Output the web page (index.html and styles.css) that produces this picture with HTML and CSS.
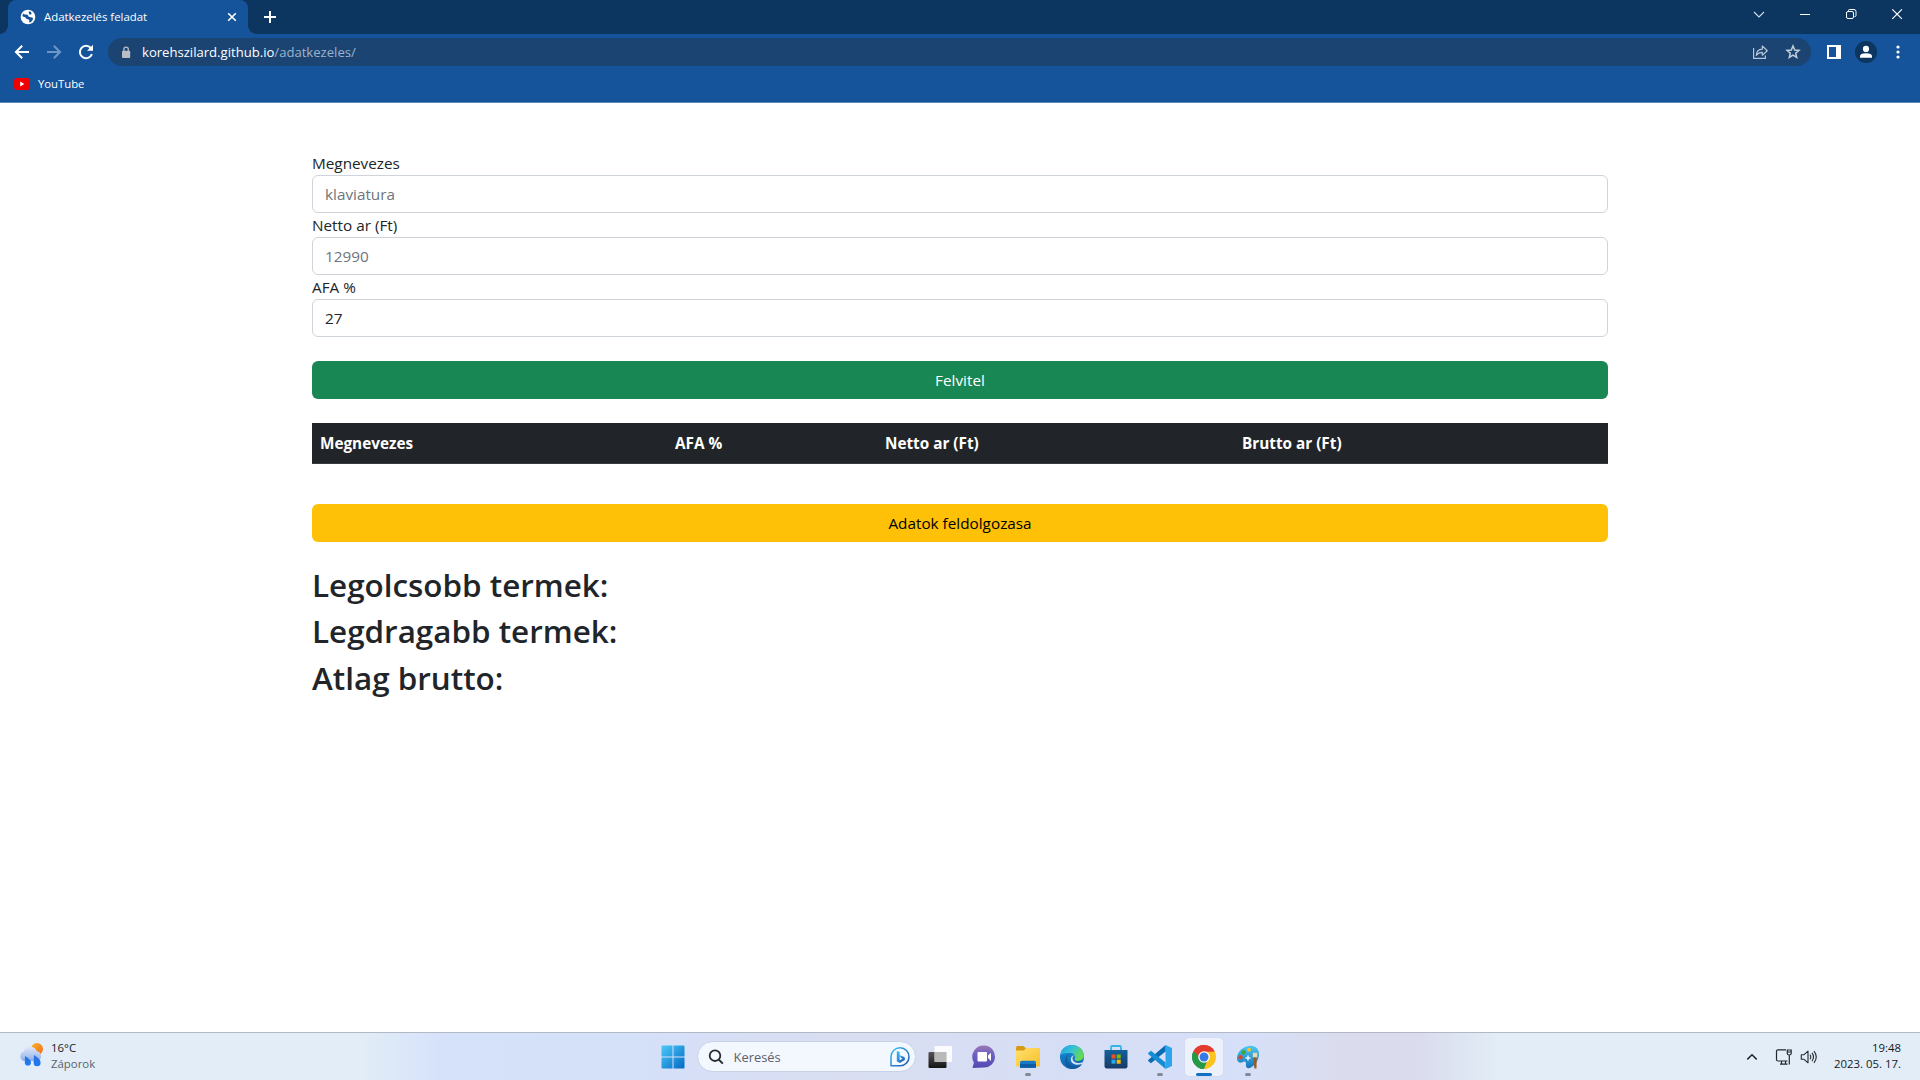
FILE: index.html
```html
<!DOCTYPE html>
<html lang="hu">
<head>
<meta charset="utf-8">
<title>Adatkezelés feladat</title>
<link rel="stylesheet" href="styles.css">
</head>
<body>
<header class="browser">
  <div class="tabstrip">
    <div class="tab">
      <svg class="favicon" width="16" height="16" viewBox="0 0 16 16"><circle cx="8" cy="8" r="7.3" fill="#fff"/><path d="M3 4.5c1.500 1.500 3 .8 4.200 1.200 1.400.5.8 2 2.500 2.300 1.600.3 3.400.2 3.300 1.700-.2 2-2 3.600-3.700 3.900-.4-1.300.6-2.200-.6-3.100-1.200-.8-2.400-.3-2.900-1.600C5.400 7.900 4 8.100 2.400 7.300zM8.800 2.600c-.5 1 .8 1.300.2 2.200-.3.700 1.700 1.100 2.400.5.6-.6-.5-1.600-.4-2.300-.7-.4-1.400-.5-2.200-.4z" fill="#15539a"/></svg>
      <span class="tab-title">Adatkezelés feladat</span>
      <svg class="tab-close" width="10" height="10" viewBox="0 0 10 10"><path d="M1.200 1.200l7.600 7.600M8.800 1.200L1.200 8.800" stroke="#fff" stroke-width="1.600"/></svg>
    </div>
    <svg class="new-tab" width="14" height="14" viewBox="0 0 14 14"><path d="M7 1v12M1 7h12" stroke="#fff" stroke-width="2"/></svg>
    <div class="window-controls">
      <svg width="46" height="30" viewBox="0 0 46 30"><path d="M18 12l5 5 5-5" fill="none" stroke="#cfe0f0" stroke-width="1.100"/></svg>
      <svg width="46" height="30" viewBox="0 0 46 30"><path d="M18 14.500h10" stroke="#fff" stroke-width="1"/></svg>
      <svg width="46" height="30" viewBox="0 0 46 30"><g fill="none" stroke="#fff"><rect x="18.500" y="11.500" width="7" height="7" rx="1.500"/><path d="M20.500 11v-.5q0-1 1-1h4.500q2 0 2 2v4q0 1-1 1h-.5"/></g></svg>
      <svg width="46" height="30" viewBox="0 0 46 30"><path d="M18.300 9.300l9.600 9.600M27.900 9.300l-9.600 9.600" stroke="#fff" stroke-width="1.200"/></svg>
    </div>
  </div>
  <div class="toolbar">
    <svg width="16" height="16" viewBox="0 0 16 16"><path d="M15 8H2.500M8.200 1.700L1.900 8l6.300 6.300" fill="none" stroke="#fff" stroke-width="2"/></svg>
    <svg width="16" height="16" viewBox="0 0 16 16"><path d="M1 8h12.500M7.800 1.700L14.100 8l-6.300 6.300" fill="none" stroke="#6c97c7" stroke-width="2"/></svg>
    <svg width="16" height="16" viewBox="0 0 16 16"><path d="M13.900 10.200A6.200 6.200 0 1 1 12.800 4" fill="none" stroke="#fff" stroke-width="2"/><path d="M15 .8v6H9z" fill="#fff"/></svg>
    <div class="omnibox">
      <svg class="lock" width="10" height="13" viewBox="0 0 10 13"><rect x="1" y="4.700" width="8.200" height="7.300" rx="1" fill="#b9bec5"/><path d="M2.900 5V3.300a2.200 2.200 0 0 1 4.400 0V5" fill="none" stroke="#b9bec5" stroke-width="1.300"/></svg>
      <span class="url">korehszilard.github.io<span class="path">/adatkezeles/</span></span>
      <svg class="share" width="17" height="16" viewBox="0 0 17 16"><g fill="none" stroke="#b6c3d2" stroke-width="1.200"><path d="M1.600 4v10.400h11.800V11.500"/><path d="M4.300 11.300c.2-4 2.500-6 6-6.100V2l5 4.700-5 4.500V8.300c-2.500-.1-4.400.8-6 3z" stroke-linejoin="round"/></g></svg>
      <svg width="16" height="16" viewBox="0 0 16 16"><path d="M8 2l1.700 4 4.300.4-3.300 2.800 1 4.200L8 11.200l-3.700 2.200 1-4.200L2 6.400 6.300 6z" fill="none" stroke="#c3cedb" stroke-width="1.500"/></svg>
    </div>
    <svg class="panel" width="14" height="14" viewBox="0 0 14 14"><path d="M0 0h14v14H0zM2 2v10h7V2z" fill="#fff" fill-rule="evenodd"/></svg>
    <svg class="profile" width="22" height="22" viewBox="0 0 22 22"><circle cx="11" cy="11" r="11" fill="#0c355f"/><circle cx="11" cy="7.900" r="3.100" fill="#fff"/><path d="M5 16.800v-1.600q0-3 6-3t6 3v1.600z" fill="#fff"/></svg>
    <svg class="menu" width="4" height="14" viewBox="0 0 4 14"><g fill="#fff"><circle cx="2" cy="2" r="1.600"/><circle cx="2" cy="7" r="1.600"/><circle cx="2" cy="12" r="1.600"/></g></svg>
  </div>
  <div class="bookmarks">
    <svg width="16" height="12" viewBox="0 0 16 12"><rect width="16" height="12" rx="3" fill="#f00000"/><path d="M6.200 3.500v5L10.400 6z" fill="#fff"/></svg>
    <span>YouTube</span>
  </div>
</header>

<main class="container">
  <label for="nev">Megnevezes</label>
  <input id="nev" class="form-control" type="text" placeholder="klaviatura">
  <label for="netto">Netto ar (Ft)</label>
  <input id="netto" class="form-control" type="text" placeholder="12990">
  <label for="afa">AFA %</label>
  <input id="afa" class="form-control" type="text" value="27">
  <button class="btn btn-success" type="button">Felvitel</button>
  <table class="table">
    <thead><tr><th class="c-name">Megnevezes</th><th class="c-vat">AFA %</th><th class="c-net">Netto ar (Ft)</th><th>Brutto ar (Ft)</th></tr></thead>
  </table>
  <button class="btn btn-warning" type="button">Adatok feldolgozasa</button>
  <h2>Legolcsobb termek:</h2>
  <h2>Legdragabb termek:</h2>
  <h2>Atlag brutto:</h2>
</main>

<footer class="taskbar">
  <div class="weather">
    <svg width="26" height="26" viewBox="0 0 26 26">
      <defs>
        <linearGradient id="sun" x2="1" y2="1"><stop stop-color="#fbb52a"/><stop offset="1" stop-color="#ee6a16"/></linearGradient>
        <linearGradient id="cloud" x2="0" y2="1"><stop stop-color="#dfe8f8"/><stop offset="1" stop-color="#8fb0e8"/></linearGradient>
        <linearGradient id="drop" x2="0" y2="1"><stop stop-color="#2c6fd8"/><stop offset="1" stop-color="#1d7cf8"/></linearGradient>
      </defs>
      <circle cx="19" cy="7" r="6" fill="url(#sun)"/>
      <path d="M6 19a5 5 0 0 1-.4-9.500A7 7 0 0 1 18.600 9 5.300 5.300 0 0 1 20 19z" fill="url(#cloud)"/>
      <path d="M7 14c3 2 6 3.700 6 6.500a3.100 3.100 0 0 1-6.200 0zM16 13c3.500 2.500 6.600 4.300 6.600 7.800a3.500 3.500 0 0 1-7 0z" fill="url(#drop)"/>
    </svg>
    <div class="weather-text"><span>16°C</span><span class="muted">Záporok</span></div>
  </div>

  <div class="apps">
    <div class="app">
      <svg width="24" height="24" viewBox="0 0 24 24"><defs><linearGradient id="win" x2="24" y2="24" gradientUnits="userSpaceOnUse"><stop stop-color="#4ccbf8"/><stop offset="1" stop-color="#0368c4"/></linearGradient></defs><path d="M.5 1.500q0-1 1-1H11.500v11H.5zM12.500.5h10q1 0 1 1v10h-11zM.5 12.500h11v11h-10q-1 0-1-1zM12.500 12.500h11v10q0 1-1 1h-10z" fill="url(#win)"/></svg>
    </div>
    <div class="search">
      <svg width="16" height="16" viewBox="0 0 16 16"><circle cx="7" cy="6.700" r="5.300" fill="none" stroke="#26292e" stroke-width="1.800"/><path d="M10.800 10.600l4 4" stroke="#26292e" stroke-width="2"/></svg>
      <span>Keresés</span>
      <svg class="bing" width="22" height="22" viewBox="0 0 22 22"><defs><linearGradient id="bing" x2="1" y2="1"><stop stop-color="#3ac1f3"/><stop offset="1" stop-color="#1c4fb4"/></linearGradient></defs><path d="M2 19.800V10.500a9 9 0 1 1 9 9.300z" fill="#f4fafe" stroke="url(#bing)" stroke-width="1.500" stroke-linejoin="round"/><path d="M7.800 5l2.800 1v8.300l3-1.600-1.800-1-1-2.400 4.400 1.600q1.200 1.200.6 3l-5 3.200-3-1.800z" fill="url(#bing)"/></svg>
    </div>
    <div class="app">
      <svg width="24" height="24" viewBox="0 0 24 24"><defs><linearGradient id="tv" x2="0" y2="1"><stop stop-color="#555"/><stop offset="1" stop-color="#151515"/></linearGradient></defs><rect x=".5" y="7" width="18" height="16" rx="1" fill="url(#tv)"/><rect x="6.500" y="1" width="17.500" height="16" rx="1" fill="#fff" opacity=".88"/><path d="M6.500 7h12v10h-12z" fill="#a9a9a9" opacity=".75"/></svg>
    </div>
    <div class="app">
      <svg width="24" height="24" viewBox="0 0 24 24"><defs><linearGradient id="chat" x2="0" y2="1"><stop stop-color="#9b79b0"/><stop offset=".35" stop-color="#7263c4"/><stop offset="1" stop-color="#5148b2"/></linearGradient></defs><path d="M12.500.5a11 11 0 1 1-1 22L.5 23l1.400-5.500A11.300 11.300 0 0 1 12.500.5z" fill="url(#chat)"/><rect x="5.500" y="7" width="9.500" height="9.500" rx="1" fill="#fff"/><path d="M16 10.500l3-2.800v8.200l-3-2.800z" fill="#fff"/></svg>
    </div>
    <div class="app running">
      <svg width="26" height="24" viewBox="0 0 26 24"><defs><linearGradient id="fold" x2="1" y2="1"><stop stop-color="#ffe06e"/><stop offset="1" stop-color="#f7c02c"/></linearGradient></defs><path d="M1 7V2.500Q1 1 2.500 1h6l2.500 2.500L9.500 7z" fill="#d79a14"/><path d="M1 5.500h8L11 3h13q1 0 1 1v17.500H1z" fill="url(#fold)"/><path d="M5 22.800V17.500Q5 15.800 6.700 15.800h12.600q1.700 0 1.700 1.700v5.300z" fill="#1679c8"/><path d="M5 19h16v3.800H5z" fill="#0f5ba3"/></svg>
    </div>
    <div class="app">
      <svg width="26" height="26" viewBox="0 0 26 26"><defs><linearGradient id="eg" x2="1" y2=".5"><stop stop-color="#1b9fe0"/><stop offset=".5" stop-color="#35c1d6"/><stop offset="1" stop-color="#66da50"/></linearGradient><linearGradient id="eb" x2="0" y2="1"><stop stop-color="#1593d8"/><stop offset="1" stop-color="#1262ae"/></linearGradient></defs><circle cx="13" cy="13" r="12" fill="url(#eb)"/><path d="M1.200 11.300C2.500 4.500 7.300 1 13 1c7 0 12 5.500 12 10.300 0 4-3.400 5.700-6.300 5.700-2.400 0-3.600-.8-3-1.900.9-1.500.7-5.500-4.200-6-4.300-.4-8 .3-10.300 2.200z" fill="url(#eg)"/><path d="M10.700 9.200c-4 2.200-3.600 9 1 11.700 3.500 2.100 8 1.700 11.500-.8-2 3-5.600 5.100-9.800 4.900C7.300 24.800 5.200 18.300 6.600 14c.8-2.800 2.500-4.200 4.100-4.800z" fill="#145b9e"/><path d="M15.700 11.500c-2.200.3-3 3.200-1.200 5.500 2.300 2.700 7.400 2.400 9.800.8l-1.400 2.300c-5 1.500-10.500.4-11.100-4.100-.3-2.800 1.600-5 3.900-4.500z" fill="#d9e1f5"/></svg>
    </div>
    <div class="app">
      <svg width="24" height="24" viewBox="0 0 24 24"><defs><linearGradient id="store" x2="0" y2="1"><stop stop-color="#146099"/><stop offset="1" stop-color="#173a68"/></linearGradient></defs><path d="M7 6V2.300Q7 1 8.300 1h7.400Q17 1 17 2.300V6" fill="none" stroke="#35b5e6" stroke-width="1.800"/><path d="M.5 5h23v16q0 2.500-2.500 2.500H3Q.5 23.500.5 21z" fill="url(#store)"/><path d="M7.500 9.500h4v4h-4z" fill="#f25022"/><path d="M12.700 9.500h4v4h-4z" fill="#7fba00"/><path d="M7.500 14.700h4v4h-4z" fill="#27a9ea"/><path d="M12.700 14.700h4v4h-4z" fill="#ffb900"/></svg>
    </div>
    <div class="app running">
      <svg width="26" height="26" viewBox="0 0 26 26"><path d="M18.500 1L25 4v18l-6.500 3z" fill="#2da5ec"/><path d="M18.500 1v6.500L4 19.200 1.200 17V16z" fill="#0b6cb2"/><path d="M18.500 25v-6.500L4 6.800 1.200 9v1z" fill="#168cd4"/></svg>
    </div>
    <div class="app running active">
      <svg width="26" height="26" viewBox="0 0 26 26"><path d="M13 13L2.610 7A12 12 0 0 1 23.390 7z" fill="#e33b2e"/><path d="M13 13L23.390 7A12 12 0 0 1 13 25z" fill="#fcc31e"/><path d="M13 13V25A12 12 0 0 1 2.610 7z" fill="#279847"/><path d="M13 7.500h10.650L17.800 15.700 13 25l-2-6z" fill="#fcc31e"/><path d="M2.610 7l5.600 9 4 2 3.800-1L13 25A12 12 0 0 1 2.610 7z" fill="#279847"/><path d="M2.610 7A12 12 0 0 1 23.600 7.600H13l-5 5z" fill="#e33b2e"/><circle cx="13" cy="13" r="5.800" fill="#fff"/><circle cx="13" cy="13" r="4.500" fill="#3779e6"/></svg>
    </div>
    <div class="app running">
      <svg width="26" height="26" viewBox="0 0 26 26"><defs><linearGradient id="paint" x2="0" y2="1"><stop stop-color="#4cc9ef"/><stop offset="1" stop-color="#1674bd"/></linearGradient></defs><path d="M14 2C20 1 24.500 5 24 11c-.4 5-4 10-8 12.500-3 1.500-5.500.2-5-2.800.5-2.500-1-4-3-2.800-3 1.600-6 .6-6-3.400C2 8 7 3 14 2z" fill="url(#paint)"/><circle cx="14" cy="5.800" r="2" fill="#f4c128"/><circle cx="8.500" cy="8.200" r="2.200" fill="#3fa43c"/><circle cx="5.500" cy="13.300" r="2.200" fill="#d24c24"/><path d="M13 11.500v5M10.500 14h5" stroke="#e8f7fd" stroke-width="1.500"/><path d="M17.800 8.800h4.500v4.700h-4.500z" fill="#ead8ae"/><path d="M18.300 13.500h3.400l-.2 11h-2.200z" fill="#975c25"/></svg>
    </div>
  </div>

  <div class="tray">
    <svg class="chevron" width="12" height="8" viewBox="0 0 12 8"><path d="M1.300 6.400L6 1.700l4.700 4.700" fill="none" stroke="#24282e" stroke-width="1.500"/></svg>
    <svg class="network" width="18" height="18" viewBox="0 0 18 18"><g fill="none" stroke="#24282e" stroke-width="1.200"><path d="M11 1.800H3Q1.500 1.800 1.500 3.300v8.200Q1.500 13 3 13h9.500M5 16.200h7.500M6.500 13v3M10.500 13v3"/><path d="M12.300 2h3.900v3.500q0 1.500-1.900 1.500t-2-1.500zM14.300 7v9.500M12.300 4h3.900"/></g></svg>
    <svg class="volume" width="18" height="16" viewBox="0 0 18 16"><g fill="none" stroke="#24282e" stroke-width="1.100"><path d="M1.300 5.800h2.500L8 2.200v11.600l-4.200-3.600H1.300z" stroke-linejoin="round"/><path d="M10 5.800q1.500 2.200 0 4.400M12 3.900q3 4.100 0 8.200M14 2.200q4.500 5.800 0 11.600"/></g></svg>
    <div class="clock"><span>19:48</span><span>2023. 05. 17.</span></div>
  </div>
</footer>
</body>
</html>
```
FILE: styles.css
```css
* { box-sizing: border-box; }

body {
  margin: 0;
  height: 100vh;
  display: flex;
  flex-direction: column;
  overflow: hidden;
  background: #fff;
  color: #212529;
  font-family: "Open Sans", "Noto Sans", sans-serif;
  font-size: 15.3px;
  line-height: 24px;
}

svg { display: block; flex: none; }

/* browser chrome */
.browser {
  flex: none;
  height: 103px;
  background: #15539a;
  border-bottom: 1px solid #5c86b5;
  color: #fff;
}

.tabstrip {
  display: flex;
  height: 34px;
  padding-left: 8px;
  background: #0c355f;
}

.tab {
  position: relative;
  display: flex;
  align-items: center;
  width: 240px;
  padding: 0 11px 0 12px;
  background: #15539a;
  border-radius: 8px 8px 0 0;
}

.tab::before,
.tab::after {
  content: "";
  position: absolute;
  bottom: 0;
  width: 8px;
  height: 8px;
}

.tab::before {
  left: -8px;
  background: radial-gradient(circle at 0 0, transparent 7.5px, #15539a 8px);
}

.tab::after {
  right: -8px;
  background: radial-gradient(circle at 100% 0, transparent 7.5px, #15539a 8px);
}

.tab-title {
  margin-left: 8px;
  font-size: 11.4px;
  line-height: 16px;
}

.tab-close { margin-left: auto; }

.new-tab { margin: 10px 0 0 15px; }

.window-controls { display: flex; margin-left: auto; }

.toolbar {
  display: flex;
  align-items: center;
  gap: 16px;
  height: 36px;
  padding: 0 20px 0 14px;
}

.omnibox {
  display: flex;
  flex: 1;
  align-items: center;
  height: 28px;
  margin: 0 0 0 -2px;
  padding: 0 10px 0 13px;
  border-radius: 14px;
  background: #1b4473;
}

.url {
  margin-left: 11px;
  font-size: 13.1px;
  line-height: 20px;
}

.path { color: #9db3cc; }

.share { margin: 0 16px 0 auto; }

.profile { margin-left: -2px; }

.menu { margin-left: 3px; }

.bookmarks {
  display: flex;
  align-items: center;
  gap: 8px;
  height: 28px;
  padding-left: 14px;
  font-size: 11.3px;
}

/* page */
.container {
  flex: 1;
  width: 1296px;
  margin: 0 auto;
  padding-top: 48px;
}

label { display: block; }

.form-control {
  display: block;
  width: 100%;
  height: 38px;
  padding: 6px 12px;
  border: 1px solid #ced4da;
  border-radius: 6px;
  background: #fff;
  color: #212529;
  font: inherit;
}

.form-control::placeholder { color: #6c757d; opacity: 1; }

.btn {
  display: block;
  width: 100%;
  height: 38px;
  padding: 0 12px;
  border: 0;
  border-radius: 6px;
  font: inherit;
}

.btn-success { margin-top: 24px; background: #198754; color: #fff; }

.btn-warning { background: #ffc107; color: #000; }

.table {
  width: 100%;
  margin: 24px 0 40px;
  border-collapse: collapse;
  table-layout: fixed;
}

.table th {
  padding: 8px;
  border-bottom: 1px solid #373b3e;
  background: #212529;
  color: #fff;
  font-weight: 700;
  text-align: left;
}

.c-name { width: 355px; }
.c-vat { width: 210px; }
.c-net { width: 357px; }

h2 {
  margin: 0 0 8px;
  font-size: 31.4px;
  font-weight: 550;
  line-height: 38.4px;
}

.btn-warning + h2 { margin-top: 24px; }

/* taskbar */
.taskbar {
  display: grid;
  grid-template-columns: 1fr auto 1fr;
  align-items: center;
  flex: none;
  height: 48px;
  border-top: 1px solid #b3b9c4;
  background: linear-gradient(90deg, #e2edf7 0, #e2edf7 360px, #d6e2fa 440px, #d5e0f9 640px, #d9def1 840px, #d6def5 1060px, #d6e0f8 1250px, #dadced 1340px, #dadced 1420px, #e2edf7 1500px);
  color: #17191c;
  font-size: 11.4px;
  line-height: 16px;
}

.weather { display: flex; gap: 7px; padding-left: 18px; }

.weather-text { display: flex; flex-direction: column; margin-top: -2px; }

.muted { color: #5b626c; }

.apps { display: flex; align-items: center; }

.app {
  position: relative;
  display: flex;
  align-items: center;
  justify-content: center;
  width: 38px;
  height: 38px;
  margin: 0 3px;
  border-radius: 4px;
}

.active { background: #edf1fb; box-shadow: 0 0 1px #b9c1d6; }

.running::after {
  content: "";
  position: absolute;
  left: 16px;
  bottom: 0;
  width: 6px;
  height: 3px;
  border-radius: 2px;
  background: #838995;
}

.active::after { left: 11px; width: 16px; background: #1270c4; }

.search {
  display: flex;
  align-items: center;
  width: 219px;
  height: 31px;
  margin: 0 2px;
  padding: 0 4px 0 10px;
  border: 1px solid #c9d2e6;
  border-radius: 16px;
  background: #f3f7fe;
  color: #5d6168;
  font-size: 12.9px;
}

.search span { margin-left: 10px; }

.bing { margin-left: auto; }

.tray { display: flex; align-items: center; justify-content: flex-end; padding-right: 19px; }

.network { margin-left: 17px; }

.volume { margin-left: 7px; }

.clock {
  display: flex;
  flex-direction: column;
  margin: -2px 0 0 16px;
  text-align: right;
}
```
